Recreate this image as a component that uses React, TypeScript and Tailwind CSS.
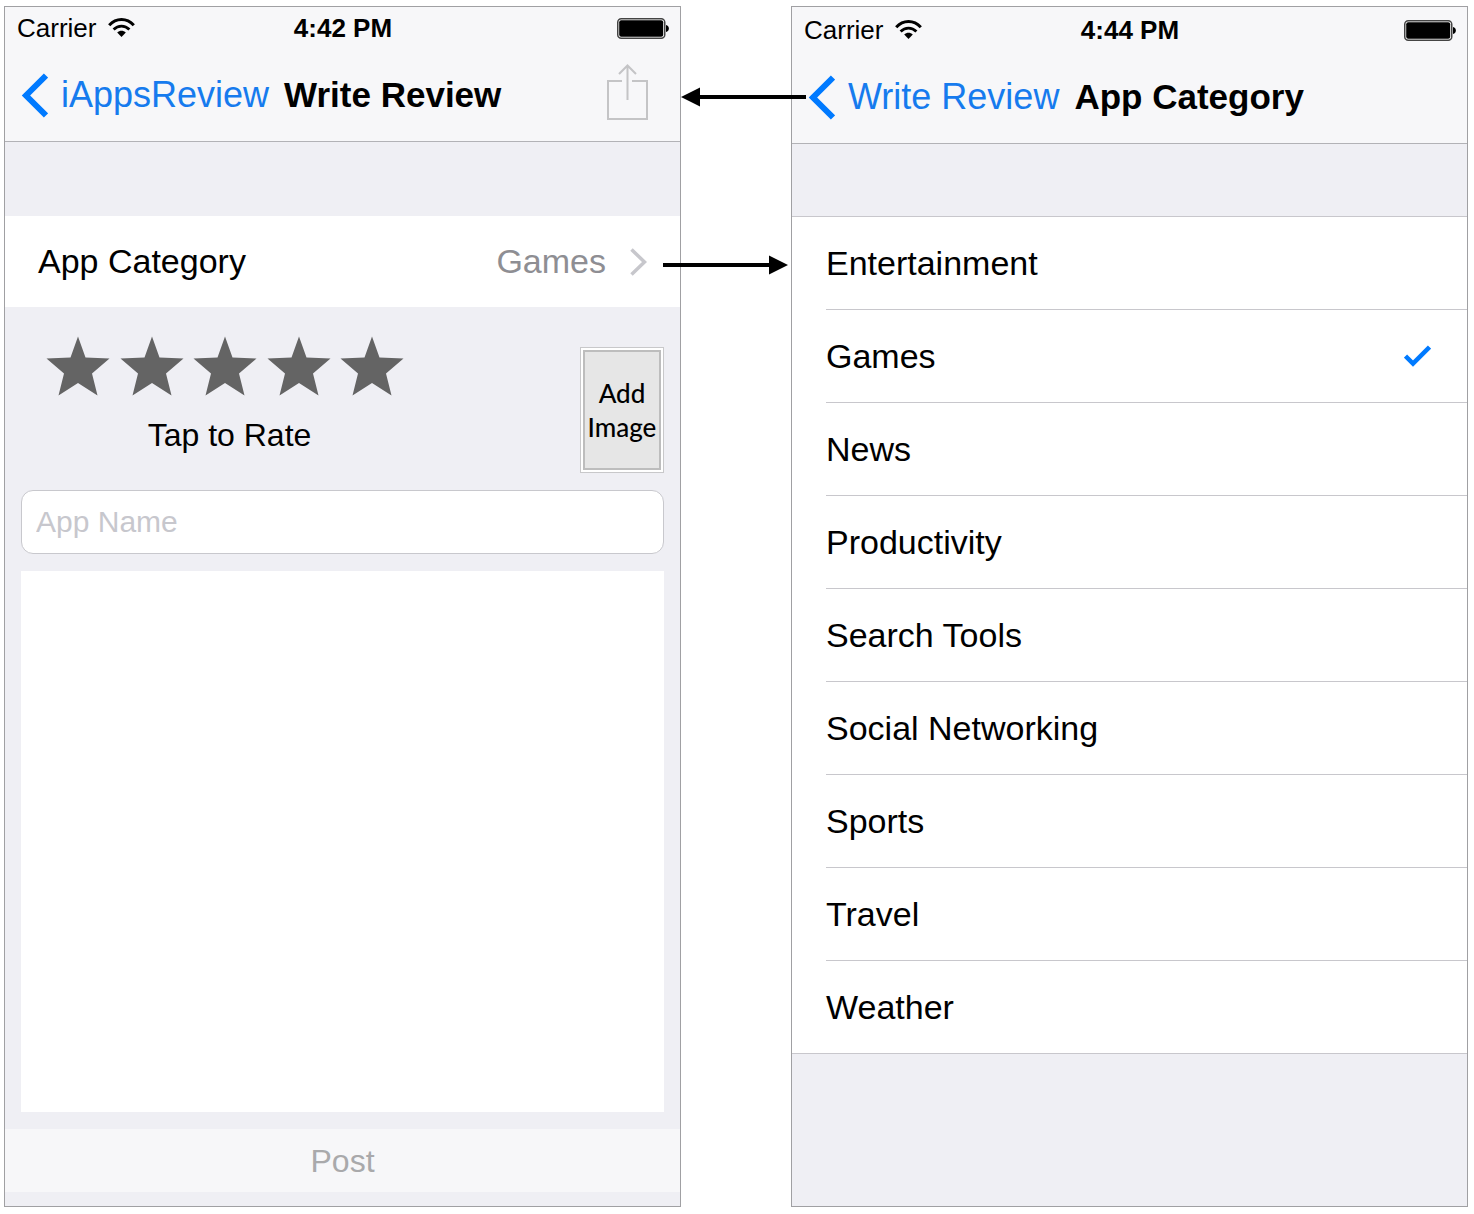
import { useState } from "react";
import type { ReactNode } from "react";

const categories = [
    "Entertainment",
    "Games",
    "News",
    "Productivity",
    "Search Tools",
    "Social Networking",
    "Sports",
    "Travel",
    "Weather",
];

function WifiIcon() {
    return (
        <svg width="27" height="20" viewBox="0 0 27 20" fill="none" aria-hidden="true">
            <path d="M1.2 7.2C8.2 -0.4 18.8 -0.4 25.8 7.2" stroke="#000" strokeWidth="3" />
            <path d="M5.6 11.6C10.2 7 16.8 7 21.4 11.6" stroke="#000" strokeWidth="2.8" />
            <path d="M9.2 14.6C11.8 12.2 15.2 12.2 17.8 14.6L13.5 19Z" fill="#000" />
        </svg>
    );
}

function BatteryIcon() {
    return (
        <svg width="52" height="21" viewBox="0 0 52 21" aria-hidden="true">
            <rect x="0.75" y="0.75" width="47" height="19.5" rx="3.5" fill="#fff" stroke="#444" strokeWidth="1.5" />
            <rect x="2.2" y="2.2" width="44" height="16.6" rx="2" fill="#000" />
            <path d="M49 7C52.8 7.5 52.8 13.5 49 14Z" fill="#000" />
        </svg>
    );
}

function BackChevron() {
    return (
        <svg width="27" height="45" viewBox="0 0 27 45" fill="none" aria-hidden="true">
            <path d="M25 2.5L5 22.5L25 42.5" stroke="#007aff" strokeWidth="6" />
        </svg>
    );
}

function ShareIcon() {
    return (
        <svg width="41" height="57" viewBox="0 0 41 57" fill="none" stroke="#c4c4c6" strokeWidth="2" aria-hidden="true">
            <path d="M15 17H1v38h39V17H25" />
            <path d="M20.5 36V2M12 10l8.5-8.5L29 10" />
        </svg>
    );
}

function Star() {
    return (
        <svg width="64" height="60" viewBox="0 0 64 60" aria-hidden="true">
            <path
                d="M32 .5L39.5 21.5L63.5 22.5L46 37.5L51.5 59.5L32 47L12.5 59.5L18 37.5L.5 22.5L24.5 21.5Z"
                fill="#646464"
            />
        </svg>
    );
}

function Arrow({ flipped = false }: { flipped?: boolean }) {
    return (
        <svg
            width="125"
            height="20"
            viewBox="0 0 125 20"
            className={flipped ? "rotate-180" : ""}
            aria-hidden="true"
        >
            <path d="M0 8h106V.5L125 10L106 19.5V12H0Z" fill="#000" />
        </svg>
    );
}

interface PhoneHeaderProps {
    time: string;
    back: string;
    title: string;
    className?: string;
    children?: ReactNode;
}

function PhoneHeader({ time, back, title, className = "", children }: PhoneHeaderProps) {
    return (
        <header className={`border-b border-[#b2b2b6] bg-[#f7f7f9] ${className}`}>
            <div className="grid h-[42px] grid-cols-3 items-center pl-3 pr-[11px] text-[26px] leading-8">
                <div className="flex items-center gap-3">
                    <span>Carrier</span>
                    <WifiIcon />
                </div>
                <span className="text-center font-bold">{time}</span>
                <div className="flex justify-end">
                    <BatteryIcon />
                </div>
            </div>
            <div className="relative flex h-[92px] items-center pl-4 pr-8">
                <button type="button" className="flex items-center gap-[13px] text-[36px] leading-[44px] text-[#167bee]">
                    <BackChevron />
                    {back}
                </button>
                <h1 className="ml-[15px] flex-1 whitespace-nowrap text-[35px] font-bold leading-[44px]">{title}</h1>
                {children}
            </div>
        </header>
    );
}

function ReviewScreen({ category }: { category: string }) {
    const [rating, setRating] = useState(0);

    return (
        <section className="flex flex-col border border-[#a0a0a3] bg-[#efeff4]">
            <PhoneHeader time="4:42 PM" back="iAppsReview" title="Write Review">
                <button type="button" aria-label="Share" className="mb-1.5">
                    <ShareIcon />
                </button>
            </PhoneHeader>

            <div className="relative mt-[74px]">
                <button
                    type="button"
                    className="flex h-[91px] w-full items-center bg-white pl-[33px] pr-[33px] text-[34px]"
                >
                    <span>App Category</span>
                    <span className="ml-auto mr-6 text-[#8e8e93]">{category}</span>
                    <svg width="17" height="28" viewBox="0 0 17 28" fill="none" aria-hidden="true">
                        <path d="M1.5 1.5L14.5 14L1.5 26.5" stroke="#c7c7cc" strokeWidth="3.5" />
                    </svg>
                </button>
                <div className="absolute -right-[108px] top-[39px]">
                    <Arrow />
                </div>
            </div>

            <div className="flex items-start justify-between pb-[17px] pl-[41px] pr-4 pt-[29px]">
                <div className="w-[367px]">
                    <div className="flex w-[358px] justify-between">
                        {[1, 2, 3, 4, 5].map((value) => (
                            <button
                                key={value}
                                type="button"
                                aria-label={`${value} stars`}
                                aria-pressed={rating === value}
                                onClick={() => setRating(value)}
                            >
                                <Star />
                            </button>
                        ))}
                    </div>
                    <p className="mt-5 text-center text-[32px] leading-[38px]">Tap to Rate</p>
                </div>
                <button
                    type="button"
                    className="mt-[11px] h-[126px] w-[84px] border border-[#c8c8ca] bg-white p-0.5"
                >
                    <span className="flex h-full items-center justify-center border-2 border-[#bdbdbd] bg-[#e6e6e6] font-['Lato',sans-serif] text-[26px] font-medium leading-[34px]">
                        Add
                        <br />
                        Image
                    </span>
                </button>
            </div>

            <div className="flex flex-1 flex-col gap-[17px] px-4 pb-[17px]">
                <input
                    type="text"
                    aria-label="App Name"
                    placeholder="App Name"
                    className="h-16 w-full rounded-xl border border-[#c8c8cd] bg-white px-[14px] text-[30px] placeholder:text-[#c7c7cd]"
                />
                <textarea aria-label="Review" className="w-full flex-1 resize-none bg-white p-3 text-[30px]" />
            </div>

            <div className="mb-[14px] bg-[#f7f7f9]">
                <button type="button" className="block h-[63px] w-full text-center text-[32px] text-[#a9a9ab]">
                    Post
                </button>
            </div>
        </section>
    );
}

interface CategoryScreenProps {
    category: string;
    onSelect: (category: string) => void;
}

function CategoryScreen({ category, onSelect }: CategoryScreenProps) {
    return (
        <section className="border border-[#a0a0a3] bg-[#efeff4]">
            <PhoneHeader time="4:44 PM" back="Write Review" title="App Category" className="pt-0.5">
                <div className="absolute -left-[111px] top-9">
                    <Arrow flipped />
                </div>
            </PhoneHeader>

            <ul className="mt-[72px] border-y border-[#c8c7cc] bg-white pl-[34px]">
                {categories.map((name) => (
                    <li key={name} className="border-b border-[#c8c7cc] last:border-b-0">
                        <label className="relative flex h-[92px] items-center pr-9 text-[34px]">
                            <input
                                type="radio"
                                name="category"
                                className="sr-only"
                                checked={category === name}
                                onChange={() => onSelect(name)}
                            />
                            <span className="flex-1">{name}</span>
                            {category === name && (
                                <svg width="27" height="22" viewBox="0 0 27 22" fill="none" aria-hidden="true">
                                    <path d="M1.5 11L9 18.5L25.5 2" stroke="#007aff" strokeWidth="4.5" />
                                </svg>
                            )}
                        </label>
                    </li>
                ))}
            </ul>
        </section>
    );
}

export default function App() {
    const [category, setCategory] = useState("Games");

    return (
        <main className="grid min-h-screen grid-cols-2 gap-[110px] bg-white pb-[7px] pl-1 pr-1.5 pt-1.5 font-['Liberation_Sans',Arial,sans-serif] text-black">
            <ReviewScreen category={category} />
            <CategoryScreen category={category} onSelect={setCategory} />
        </main>
    );
}
